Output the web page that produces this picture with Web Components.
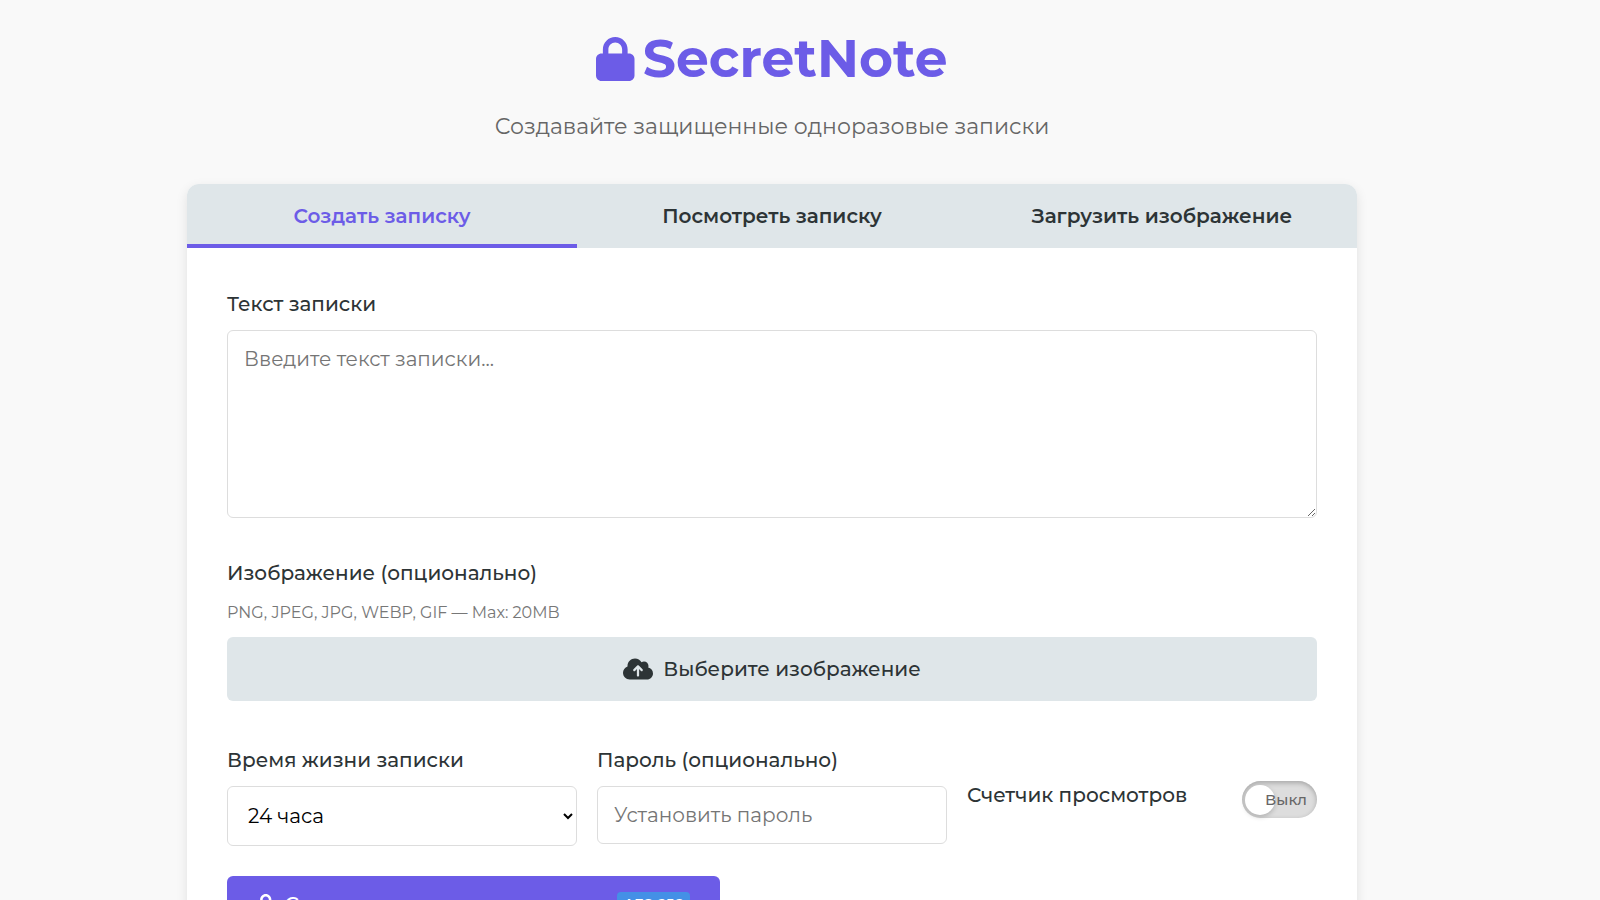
<!DOCTYPE html>
<html lang="ru">
<head>
  <meta charset="utf-8">
  <meta name="viewport" content="width=device-width, initial-scale=1">
  <title>SecretNote</title>
  <style>
    :root {
      --primary: #6c5ce7;
      --dark: #2d3436;
      --light: #dfe6e9;
      --line: #dddddd;
    }
    body {
      margin: 0;
      padding: 20px 76px 20px 20px;
      background: #f9f9f9;
      color: var(--dark);
      font: 500 20px/32px Montserrat, Inter, "Noto Sans", sans-serif;
    }
  </style>
</head>
<body>
  <secret-note-app></secret-note-app>

  <script>
    const icons = {
      lock: {
        box: "0 0 448 512",
        path: "M144 144v48H304V144c0-44.2-35.8-80-80-80s-80 35.8-80 80zM80 192V144C80 64.5 144.5 0 224 0s144 64.5 144 144v48h16c35.3 0 64 28.7 64 64V448c0 35.3-28.7 64-64 64H64c-35.3 0-64-28.7-64-64V256c0-35.3 28.7-64 64-64H80z"
      },
      cloud: {
        box: "0 0 640 512",
        path: "M144 480C64.5 480 0 415.5 0 336c0-62.8 40.2-116.2 96.2-135.9c-.1-2.7-.2-5.4-.2-8.1c0-88.4 71.6-160 160-160c59.3 0 111 32.2 138.7 80.2C409.9 102 428.3 96 448 96c53 0 96 43 96 96c0 12.2-2.3 23.8-6.4 34.6C596 238.4 640 290.1 640 352c0 70.7-57.3 128-128 128H144zm79-217c-9.4 9.4-9.4 24.6 0 33.9s24.6 9.4 33.9 0l39-39V392c0 13.3 10.7 24 24 24s24-10.7 24-24V257.9l39 39c9.4 9.4 24.6 9.4 33.9 0s9.4-24.6 0-33.9l-80-80c-9.4-9.4-24.6-9.4-33.9 0l-80 80z"
      }
    };

    class NoteIcon extends HTMLElement {
      constructor() {
        super();
        this.attachShadow({ mode: "open" });
      }

      connectedCallback() {
        const icon = icons[this.getAttribute("name")];
        this.shadowRoot.innerHTML = `
          <style>
            :host { display: block; height: 20px; flex: none; }
            svg { display: block; height: 100%; fill: currentColor; }
          </style>
          <svg viewBox="${icon.box}" aria-hidden="true"><path d="${icon.path}"/></svg>
        `;
      }
    }
    customElements.define("note-icon", NoteIcon);

    class NoteHeader extends HTMLElement {
      constructor() {
        super();
        this.attachShadow({ mode: "open" });
      }

      connectedCallback() {
        this.shadowRoot.innerHTML = `
          <style>
            :host { display: block; text-align: center; margin-bottom: 38px; }
            h1 {
              display: flex;
              justify-content: center;
              align-items: center;
              gap: 8px;
              margin: 0 0 10px;
              color: var(--primary);
              font-size: 52px;
              font-weight: 700;
              line-height: 78px;
            }
            note-icon { height: 44px; }
            p {
              margin: 0;
              color: #666;
              font-size: 22px;
              font-weight: 400;
              line-height: 38px;
            }
          </style>
          <h1><note-icon name="lock"></note-icon><slot name="title"></slot></h1>
          <p><slot></slot></p>
        `;
      }
    }
    customElements.define("note-header", NoteHeader);

    class NoteTabs extends HTMLElement {
      constructor() {
        super();
        this.attachShadow({ mode: "open" });
      }

      connectedCallback() {
        const items = this.getAttribute("items").split("|");
        this.shadowRoot.innerHTML = `
          <style>
            :host { display: block; background: var(--light); }
            nav { display: grid; grid-template-columns: repeat(3, 1fr); }
            button {
              padding: 16px 10px 12px;
              border: 0;
              border-bottom: 4px solid transparent;
              background: none;
              color: var(--dark);
              font: inherit;
              font-weight: 600;
              line-height: 32px;
              cursor: pointer;
            }
            button.active { color: var(--primary); border-color: var(--primary); }
          </style>
          <nav role="tablist">
            ${items.map((item, i) => `<button type="button" role="tab" aria-selected="${i === 0}" class="${i === 0 ? "active" : ""}">${item}</button>`).join("")}
          </nav>
        `;
        const buttons = this.shadowRoot.querySelectorAll("button");
        buttons.forEach((button) => {
          button.addEventListener("click", () => {
            buttons.forEach((b) => {
              b.classList.toggle("active", b === button);
              b.setAttribute("aria-selected", b === button);
            });
          });
        });
      }
    }
    customElements.define("note-tabs", NoteTabs);

    class NoteToggle extends HTMLElement {
      constructor() {
        super();
        this.attachShadow({ mode: "open" });
      }

      connectedCallback() {
        this.shadowRoot.innerHTML = `
          <style>
            :host { display: flex; justify-content: space-between; align-items: center; }
            .name { margin-bottom: 8px; }
            .switch {
              position: relative;
              flex: none;
              width: 75px;
              height: 37px;
              border-radius: 19px;
              background: #ddd;
              box-shadow: inset 0 2px 5px rgba(0, 0, 0, 0.25);
            }
            input {
              position: absolute;
              z-index: 1;
              inset: 0;
              width: 100%;
              height: 100%;
              margin: 0;
              opacity: 0;
              cursor: pointer;
            }
            .knob {
              position: absolute;
              top: 4px;
              left: 3px;
              width: 30px;
              height: 30px;
              border-radius: 50%;
              background: #fff;
              box-shadow: 0 2px 5px rgba(0, 0, 0, 0.2);
            }
            .state {
              position: absolute;
              right: 10px;
              top: 0;
              color: #666;
              font-size: 15px;
              line-height: 37px;
            }
            input:checked ~ .knob { left: 42px; }
            input:checked ~ .state { right: auto; left: 10px; }
          </style>
          <label class="name" for="counter"><slot></slot></label>
          <div class="switch">
            <input type="checkbox" id="counter" aria-label="Счетчик просмотров">
            <span class="knob"></span>
            <span class="state">Выкл</span>
          </div>
        `;
        const input = this.shadowRoot.querySelector("input");
        const state = this.shadowRoot.querySelector(".state");
        input.addEventListener("change", () => {
          state.textContent = input.checked ? "Вкл" : "Выкл";
        });
      }
    }
    customElements.define("note-toggle", NoteToggle);

    class NoteForm extends HTMLElement {
      constructor() {
        super();
        this.attachShadow({ mode: "open" });
      }

      connectedCallback() {
        this.shadowRoot.innerHTML = `
          <style>
            :host { display: block; padding: 40px; }
            * { box-sizing: border-box; }
            label { display: block; margin-bottom: 10px; }
            .field { margin-bottom: 39px; }
            textarea, input, select {
              display: block;
              width: 100%;
              border: 1px solid var(--line);
              border-radius: 6px;
              background: #fff;
              font: inherit;
              font-weight: 400;
              line-height: 24px;
            }
            textarea { height: 188px; padding: 16px; resize: vertical; }
            input { padding: 16px; }
            input[hidden] { display: none; }
            select { height: 60px; padding: 16px; color: #000; }
            ::placeholder { color: #757575; }
            .hint {
              margin: 0 0 10px;
              color: #777;
              font-size: 16px;
              font-weight: 400;
              line-height: 28px;
            }
            .file {
              display: flex;
              justify-content: center;
              align-items: center;
              gap: 10px;
              margin: 0 0 43px;
              padding: 16px;
              border-radius: 6px;
              background: var(--light);
              cursor: pointer;
            }
            .file note-icon { height: 24px; }
            .row {
              display: grid;
              grid-template-columns: repeat(3, 1fr);
              align-items: start;
              gap: 20px;
              margin-bottom: 30px;
            }
            note-toggle { padding-top: 35px; }
            .submit {
              display: inline-flex;
              align-items: center;
              gap: 10px;
              padding: 16px 30px;
              border: 0;
              border-radius: 6px;
              background: var(--primary);
              color: #fff;
              font: inherit;
              line-height: 24px;
              cursor: pointer;
            }
            .badge {
              padding: 0 7px;
              border-radius: 4px;
              background: #4490e6;
              font-size: 14px;
              font-weight: 600;
              line-height: 24px;
            }
          </style>
          <form>
            <div class="field">
              <label for="text">Текст записки</label>
              <textarea id="text" placeholder="Введите текст записки..."></textarea>
            </div>
            <label for="image">Изображение (опционально)</label>
            <p class="hint">PNG, JPEG, JPG, WEBP, GIF — Max: 20MB</p>
            <label class="file" for="image"><note-icon name="cloud"></note-icon>Выберите изображение</label>
            <input type="file" id="image" accept="image/*" hidden>
            <div class="row">
              <div>
                <label for="ttl">Время жизни записки</label>
                <select id="ttl">
                  <option>24 часа</option>
                </select>
              </div>
              <div>
                <label for="password">Пароль (опционально)</label>
                <input type="password" id="password" placeholder="Установить пароль">
              </div>
              <note-toggle>Счетчик просмотров</note-toggle>
            </div>
            <button type="submit" class="submit">
              <note-icon name="lock"></note-icon>
              <span>Создать защищенную записку</span>
              <span class="badge">AES-256</span>
            </button>
          </form>
        `;
        this.shadowRoot.querySelector("form").addEventListener("submit", (e) => e.preventDefault());
      }
    }
    customElements.define("note-form", NoteForm);

    class SecretNoteApp extends HTMLElement {
      constructor() {
        super();
        this.attachShadow({ mode: "open" });
      }

      connectedCallback() {
        this.shadowRoot.innerHTML = `
          <style>
            :host { display: block; max-width: 1170px; margin: 0 auto; }
            main {
              overflow: hidden;
              border-radius: 12px;
              background: #fff;
              box-shadow: 0 4px 12px rgba(0, 0, 0, 0.1);
            }
          </style>
          <note-header><span slot="title">SecretNote</span>Создавайте защищенные одноразовые записки</note-header>
          <main>
            <note-tabs items="Создать записку|Посмотреть записку|Загрузить изображение"></note-tabs>
            <note-form></note-form>
          </main>
        `;
      }
    }
    customElements.define("secret-note-app", SecretNoteApp);
  </script>
</body>
</html>
